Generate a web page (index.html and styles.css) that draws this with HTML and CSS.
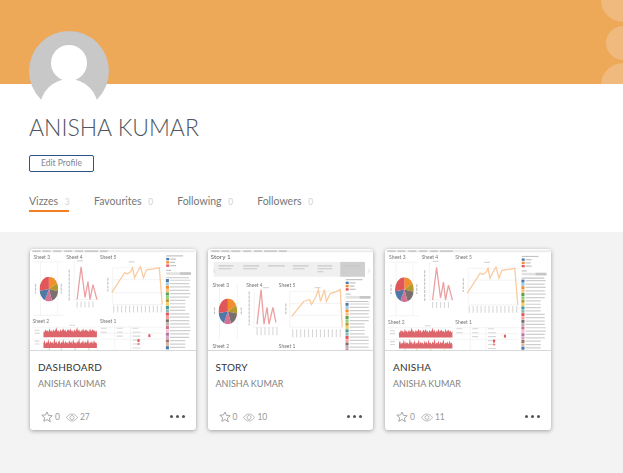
FILE: index.html
```html
<!DOCTYPE html>
<html lang="en">
<head>
<meta charset="utf-8">
<title>Anisha Kumar</title>
<link rel="stylesheet" href="styles.css">
</head>
<body>
<svg class="sprite" width="0" height="0" aria-hidden="true">
  <defs>
    <symbol id="pie" viewBox="0 0 24 30" preserveAspectRatio="none">
      <path d="M12 15 L12 0 A12 15 0 0 1 22.400 7.500Z" fill="#f28e2b"/>
      <path d="M12 15 L22.400 7.500 A12 15 0 0 1 23.800 17.500Z" fill="#b6992d"/>
      <path d="M12 15 L23.800 17.500 A12 15 0 0 1 16 29.200Z" fill="#79706e"/>
      <path d="M12 15 L16 29.200 A12 15 0 0 1 7 28.600Z" fill="#d37295"/>
      <path d="M12 15 L7 28.600 A12 15 0 0 1 .2 17Z" fill="#4e79a7"/>
      <path d="M12 15 L.2 17 A12 15 0 0 1 12 0Z" fill="#e15759"/>
    </symbol>
    <symbol id="legend" viewBox="0 0 26 72">
      <path d="M5 1.500H25M5 4.800H24M5 8.100H25M5 11.400H24M5 14.700H25M5 18H24M5 21.300H20M5 24.600H20M5 27.900H20M5 31.200H20M5 34.500H24M5 37.800H24M5 41.100H24M5 44.400H24M5 47.700H25M5 51H25M5 54.300H24M5 57.600H24M5 60.900H20M5 64.200H20M5 67.500H20M5 70.800H20" stroke="#cfcfcf" stroke-width="1.200" fill="none"/>
      <rect x="1" y=".3" width="3" height="3" fill="#4e79a7"/>
      <rect x="1" y="3.6" width="3" height="3" fill="#a0cbe8"/>
      <rect x="1" y="6.9" width="3" height="3" fill="#f28e2b"/>
      <rect x="1" y="10.2" width="3" height="3" fill="#ffbe7d"/>
      <rect x="1" y="13.5" width="3" height="3" fill="#59a14f"/>
      <rect x="1" y="16.8" width="3" height="3" fill="#8cd17d"/>
      <rect x="1" y="20.1" width="3" height="3" fill="#b6992d"/>
      <rect x="1" y="23.4" width="3" height="3" fill="#f1ce63"/>
      <rect x="1" y="26.7" width="3" height="3" fill="#499894"/>
      <rect x="1" y="30" width="3" height="3" fill="#86bcb6"/>
      <rect x="1" y="33.3" width="3" height="3" fill="#e15759"/>
      <rect x="1" y="36.6" width="3" height="3" fill="#ff9d9a"/>
      <rect x="1" y="39.9" width="3" height="3" fill="#79706e"/>
      <rect x="1" y="43.2" width="3" height="3" fill="#bab0ac"/>
      <rect x="1" y="46.5" width="3" height="3" fill="#d37295"/>
      <rect x="1" y="49.8" width="3" height="3" fill="#fabfd2"/>
      <rect x="1" y="53.1" width="3" height="3" fill="#b07aa1"/>
      <rect x="1" y="56.4" width="3" height="3" fill="#d4a6c8"/>
      <rect x="1" y="59.7" width="3" height="3" fill="#9d7660"/>
      <rect x="1" y="63" width="3" height="3" fill="#d7b5a6"/>
      <rect x="1" y="66.3" width="3" height="3" fill="#4e79a7"/>
      <rect x="1" y="69.6" width="3" height="3" fill="#a0cbe8"/>
    </symbol>
    <symbol id="filters" viewBox="0 0 26 24">
      <path d="M1 1H18" stroke="#c4c4c4" stroke-width="1.200"/>
      <rect x="1" y="3" width="3" height="2.400" fill="#4e79a7"/>
      <path d="M5 4.200H11" stroke="#c4c4c4" stroke-width="1.200"/>
      <rect x="1" y="6.300" width="3" height="2.400" fill="#f28e2b"/>
      <path d="M5 7.500H10" stroke="#c4c4c4" stroke-width="1.200"/>
      <rect x="1" y="9.600" width="3" height="2.400" fill="#e15759"/>
      <path d="M5 10.800H11" stroke="#c4c4c4" stroke-width="1.200"/>
      <path d="M1 15.500H6" stroke="#c4c4c4" stroke-width="1.200"/>
      <rect x="1" y="17.500" width="25" height="2.600" fill="#e2e2e2"/>
      <rect x="15" y="17.500" width="11" height="2.600" fill="#c6c6c6"/>
      <path d="M1 23H24" stroke="#c4c4c4" stroke-width="1.200"/>
    </symbol>
    <symbol id="dash" viewBox="0 0 165 101">
      <text x="2" y="9" class="vt">Sheet 3</text>
      <text x="35" y="9" class="vt">Sheet 4</text>
      <text x="69" y="9" class="vt">Sheet 5</text>
      <text x="1" y="74" class="vt">Sheet 2</text>
      <text x="69" y="74" class="vt">Sheet 1</text>
      <path d="M9 12V66M26 12V66M2 12H32M2 66H32" class="grid"/>
      <path d="M43 12V50M68 50H43M82 18V55H132M82 18H134M82 30H134M82 43H134" class="grid"/>
      <path d="M1 78H66M1 90H66M69 78H133M69 84H133M69 90H133M84 76V101M100 76V101" class="grid"/>
      <use href="#pie" x="8" y="27" width="19" height="25"/>
      <path d="M46 50 50 17 54 48 57 32 59 50 62 35 66 50" class="pink"/>
      <path d="M81 43 94 23 97 24 100 22 102 18 104 28 108 20 110 17 113 28 116 20 123 19 129 18 132 55" class="peach"/>
      <path d="M38 20V52M77 28V42M4 34V44M30 34V44" stroke="#c4c4c4" stroke-width="1.200" stroke-dasharray="3 1"/>
      <path d="M46 11H52M98 12H104M38 76H44M83 56V63M87 56V63M91 56V63M95 56V63M99 56V63M103 56V63M107 56V63M111 56V63M115 56V63M119 56V63M123 56V63M127 56V63M131 56V63M46 52V58M50 52V58M54 52V58M58 52V58M62 52V58" class="ticks"/>
      <use href="#filters" x="134" y="5" width="28" height="24"/>
      <use href="#legend" x="134" y="29" width="28" height="74"/>
      <path d="M12 88V82L13 83 14 80 15 82 16 81 17 83 18 79 19 82 20 81 21 83 22 80 23 82 24 81 25 78 26 82 27 81 28 83 29 80 30 82 31 81 32 79 33 82 34 80 35 83 36 81 37 80 38 82 39 79 40 82 41 81 42 83 43 80 44 82 45 81 46 78 47 82 48 80 49 83 50 81 51 82 52 79 53 82 54 81 55 80 56 82 57 81 58 83 59 79 60 82 61 81 62 80 63 82 64 81 65 83 66 81V88Z" fill="#dc666b"/>
      <path d="M12 99V94L13 91 14 95 15 93 16 94 17 90 18 95 19 92 20 94 21 93 22 95 23 89 24 94 25 92 26 95 27 93 28 91 29 95 30 93 31 94 32 90 33 95 34 92 35 94 36 93 37 95 38 91 39 94 40 92 41 95 42 90 43 94 44 93 45 95 46 92 47 94 48 89 49 95 50 93 51 94 52 91 53 95 54 92 55 94 56 93 57 90 58 95 59 93 60 94 61 92 62 95 63 91 64 94 65 93 66 95V99Z" fill="#dc666b"/>
      <path d="M3 81H8M3 84H8M3 92H8M3 95H8" class="ticks"/>
      <path d="M18 99V101M30 99V101M44 99V101M58 99V101" stroke="#ecc6a0" stroke-width="1"/>
      <path d="M70 79H76M86 79H92M102 79H108M70 83H76M86 83H92M86 87H92M102 83H110M102 87H110M102 91H110M102 95H110M102 99H110" class="ticks"/>
      <rect x="118" y="85" width="2" height="3" fill="#e15759"/>
      <rect x="107" y="90" width="2" height="3" fill="#e15759"/>
      <rect x="107" y="94" width="2" height="2" fill="#ee8b8d"/>
    </symbol>
  </defs>
</svg>

<header class="banner">
  <svg class="banner-dots" width="24" height="84" viewBox="0 0 24 84" aria-hidden="true">
    <circle cx="24" cy="0" r="22"/>
    <circle cx="24" cy="43" r="17"/>
    <circle cx="24" cy="85" r="22"/>
  </svg>
</header>

<section class="profile">
  <svg class="avatar" width="80" height="69" viewBox="0 0 80 69" aria-hidden="true">
    <circle cx="40" cy="40" r="40" fill="#c8c8c8"/>
    <circle cx="40" cy="32" r="18" fill="#fff"/>
    <circle cx="40" cy="77" r="29" fill="#fff"/>
  </svg>
  <h1 class="name">ANISHA KUMAR</h1>
  <a class="edit" href="#">Edit Profile</a>
  <nav class="tabs">
    <a class="tab active" href="#">Vizzes <span class="count">3</span></a>
    <a class="tab" href="#">Favourites <span class="count">0</span></a>
    <a class="tab" href="#">Following <span class="count">0</span></a>
    <a class="tab" href="#">Followers <span class="count">0</span></a>
  </nav>
</section>

<main class="gallery">
  <article class="card">
    <svg class="thumb" viewBox="0 0 165 101" aria-hidden="true">
      <rect width="165" height="2.400" fill="#eeeeee"/>
      <path d="M1 1.200H9M11 1.200H19M22 1.200H30M33 1.200H41M44 1.200H52M54 1.200H67M69 1.200H77" stroke="#bdbdbd" stroke-width="1.200"/>
      <use href="#dash" width="165" height="101"/>
    </svg>
    <div class="info">
      <h2 class="title">DASHBOARD</h2>
      <p class="author">ANISHA KUMAR</p>
      <div class="stats">
        <svg class="star" width="12" height="12" viewBox="0 0 24 24" aria-hidden="true"><path d="M12 2l3 6.800 7.400.7-5.600 4.900 1.700 7.200L12 17l-6.500 3.600 1.700-7.200-5.600-4.900 7.400-.7z"/></svg>
        <span class="num">0</span>
        <svg class="eye" width="12" height="9" viewBox="0 0 24 16" aria-hidden="true"><path d="M1 8c3-4.500 7-7 11-7s8 2.500 11 7c-3 4.500-7 7-11 7S4 12.500 1 8z"/><circle cx="12" cy="8" r="4"/></svg>
        <span class="num">27</span>
        <span class="more"><i></i><i></i><i></i></span>
      </div>
    </div>
  </article>

  <article class="card">
    <svg class="thumb" viewBox="0 0 165 101" aria-hidden="true">
      <rect width="165" height="2.400" fill="#eeeeee"/>
      <path d="M2 1.200H10M12 1.200H20M22 1.200H31M34 1.200H42M45 1.200H53M55 1.200H68M70 1.200H78" stroke="#bdbdbd" stroke-width="1.200"/>
      <text x="1" y="9.500" class="vs">Story 1</text>
      <rect x="4" y="12" width="153" height="15" fill="#f0f0f0"/>
      <rect x="132" y="12" width="25" height="15" fill="#cfcfcf"/>
      <path d="M6 19 4 21 6 23M160 19 162 21 160 23" stroke="#ddd" fill="none"/>
      <path d="M9 16H24M9 19H22M34 16H50M34 19H48M59 16H76M84 16H100M84 19H96M109 16H124M109 19H124M109 22H115M136 16H152" stroke="#c8c8c8" stroke-width="1.100"/>
      <text x="3" y="37" class="vt">Sheet 3</text>
      <text x="37" y="37" class="vt">Sheet 4</text>
      <text x="70" y="37" class="vt">Sheet 5</text>
      <text x="3" y="99" class="vt">Sheet 2</text>
      <text x="70" y="99" class="vt">Sheet 1</text>
      <path d="M10 35V90M28 35V90M45 40V78H68M81 42V78H134M81 42H134M81 54H134M81 66H134" class="grid"/>
      <use href="#pie" x="9" y="49" width="19" height="26"/>
      <path d="M48 75 52 40 55 75 58 58 60 75 64 58 67 73" class="pink"/>
      <path d="M83 67 95 52 101 50 103 55 107 48 110 40 112 52 116 40 118 52 122 44 128 42 132 40 134 78" class="peach"/>
      <path d="M40 42V76M77 54V66M5 58V66M32 58V66" stroke="#c4c4c4" stroke-width="1.200" stroke-dasharray="3 1"/>
      <path d="M54 38H60M106 38H112M84 80V88M88 80V88M92 80V88M96 80V88M100 80V88M104 80V88M108 80V88M112 80V88M116 80V88M120 80V88M124 80V88M128 80V88M132 80V88M48 78V86M52 78V86M56 78V86M60 78V86M64 78V86M68 78V86" class="ticks"/>
      <use href="#filters" x="136" y="29" width="27" height="24"/>
      <use href="#legend" x="136" y="53" width="27" height="73"/>
    </svg>
    <div class="info">
      <h2 class="title">STORY</h2>
      <p class="author">ANISHA KUMAR</p>
      <div class="stats">
        <svg class="star" width="12" height="12" viewBox="0 0 24 24" aria-hidden="true"><path d="M12 2l3 6.800 7.400.7-5.600 4.900 1.700 7.200L12 17l-6.500 3.600 1.700-7.200-5.600-4.900 7.400-.7z"/></svg>
        <span class="num">0</span>
        <svg class="eye" width="12" height="9" viewBox="0 0 24 16" aria-hidden="true"><path d="M1 8c3-4.500 7-7 11-7s8 2.500 11 7c-3 4.500-7 7-11 7S4 12.500 1 8z"/><circle cx="12" cy="8" r="4"/></svg>
        <span class="num">10</span>
        <span class="more"><i></i><i></i><i></i></span>
      </div>
    </div>
  </article>

  <article class="card">
    <svg class="thumb" viewBox="0 0 165 101" aria-hidden="true">
      <rect width="165" height="2.400" fill="#eeeeee"/>
      <path d="M1 1.200H9M11 1.200H19M22 1.200H30M33 1.200H41M44 1.200H52M54 1.200H67" stroke="#bdbdbd" stroke-width="1.200"/>
      <use href="#dash" x=".5" y=".5" width="165" height="101"/>
    </svg>
    <div class="info">
      <h2 class="title">ANISHA</h2>
      <p class="author">ANISHA KUMAR</p>
      <div class="stats">
        <svg class="star" width="12" height="12" viewBox="0 0 24 24" aria-hidden="true"><path d="M12 2l3 6.800 7.400.7-5.600 4.900 1.700 7.200L12 17l-6.500 3.600 1.700-7.200-5.600-4.900 7.400-.7z"/></svg>
        <span class="num">0</span>
        <svg class="eye" width="12" height="9" viewBox="0 0 24 16" aria-hidden="true"><path d="M1 8c3-4.500 7-7 11-7s8 2.500 11 7c-3 4.500-7 7-11 7S4 12.500 1 8z"/><circle cx="12" cy="8" r="4"/></svg>
        <span class="num">11</span>
        <span class="more"><i></i><i></i><i></i></span>
      </div>
    </div>
  </article>
</main>
</body>
</html>
```

FILE: styles.css
```css
* { box-sizing: border-box; }
html, body { margin: 0; padding: 0; height: 100%; }
body {
  width: 623px;
  height: 473px;
  overflow: hidden;
  background: #f3f3f3;
  font-family: Lato, "Open Sans", sans-serif;
  color: #555;
  display: flex;
  flex-direction: column;
}
.sprite { display: block; width: 0; height: 0; flex: none; }
a { text-decoration: none; color: inherit; }

.banner {
  height: 84px;
  flex: none;
  background: #eda858;
  display: flex;
  justify-content: flex-end;
}
.banner-dots circle { fill: #f0b97e; }

.profile {
  flex: none;
  height: 148px;
  background: #fff;
  padding-left: 29px;
  display: flex;
  flex-direction: column;
  align-items: flex-start;
}
.avatar { display: block; margin-top: -53px; flex: none; }
.name {
  margin: 12px 0 0;
  font-size: 23px;
  line-height: 30px;
  font-weight: 300;
  color: #4f5661;
  white-space: nowrap;
}
.edit {
  margin-top: 13px;
  width: 65px;
  height: 17px;
  border: 1px solid #2f5382;
  border-radius: 2px;
  font-size: 8.500px;
  line-height: 15px;
  text-align: center;
  color: #85858f;
}
.tabs { margin-top: 20px; display: flex; gap: 25px; }
.tab {
  display: block;
  height: 20px;
  font-size: 10.500px;
  line-height: 19px;
  color: #777;
  white-space: nowrap;
}
.tab + .tab + .tab { margin-left: -1px; }
.tab.active {
  width: 40px;
  border-bottom: 2px solid #f28021;
}
.count { color: #d4d4d4; font-size: 8.500px; margin-left: 4px; }

.gallery {
  flex: 1;
  padding: 17px 0 0 30px;
  display: flex;
  align-items: flex-start;
  gap: 12px;
}
.card {
  width: 165.500px;
  height: 181px;
  flex: none;
  background: #fff;
  border-radius: 3px;
  box-shadow: 0 1px 4px rgba(0, 0, 0, .35);
  display: flex;
  flex-direction: column;
  overflow: hidden;
}
.thumb {
  display: block;
  width: 165.500px;
  height: 102px;
  flex: none;
  padding: 1px 0 0 1px;
  border-bottom: 1px solid #d8d8d8;
  filter: blur(.55px);
}
.vt { font: 5px Lato, sans-serif; fill: #777; }
.vs { font: 6.500px Lato, sans-serif; fill: #666; }
.grid { stroke: #efefef; stroke-width: .7; fill: none; }
.ticks { stroke: #d8d8d8; stroke-width: 1.100; fill: none; }
.pink { stroke: #eba0a2; stroke-width: 1.300; fill: none; }
.peach { stroke: #fbcb9c; stroke-width: 1.300; fill: none; }

.info {
  flex: 1;
  padding: 9px 8px 0;
  display: flex;
  flex-direction: column;
}
.title {
  margin: 0;
  font-size: 10px;
  line-height: 14px;
  font-weight: 400;
  color: #333;
  letter-spacing: .2px;
}
.author {
  margin: 4px 0 0;
  font-size: 9px;
  line-height: 12px;
  color: #828282;
}
.stats {
  margin-top: 20px;
  display: flex;
  align-items: center;
  height: 14px;
  padding-left: 3px;
}
.star { flex: none; fill: none; stroke: #909090; stroke-width: 1.600; }
.eye { flex: none; margin-left: 6px; fill: none; stroke: #a0a0a0; stroke-width: 1.400; }
.num { font-size: 8.500px; color: #999; margin-left: 2px; }
.more { margin-left: auto; margin-right: 3px; display: flex; gap: 3px; margin-top: -1px; }
.more i { display: block; width: 3px; height: 3px; border-radius: 50%; background: #555; }
```
